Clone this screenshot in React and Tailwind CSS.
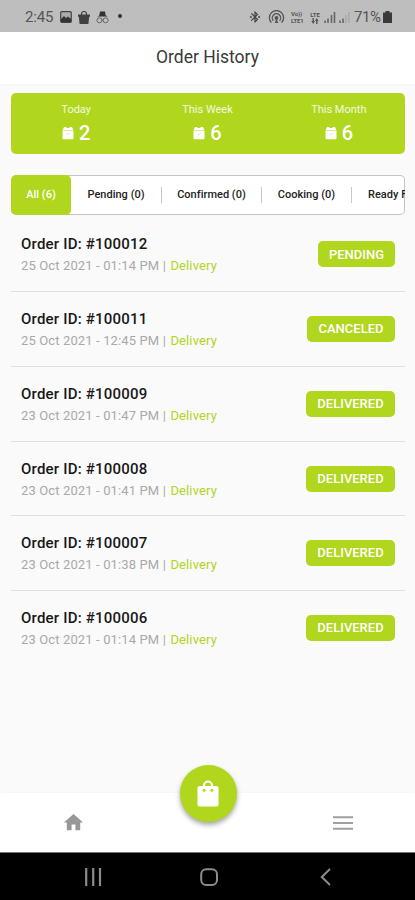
import React, { useState } from 'react'
import { MdBluetoothConnected, MdHome } from 'react-icons/md';

const stats = [
  { label: "Today", count: 2 },
  { label: "This Week", count: 6 },
  { label: "This Month", count: 6 },
]

const tabs = [
  { label: "All (6)", width: "w-[60px]" },
  { label: "Pending (0)", width: "w-[91px]" },
  { label: "Confirmed (0)", width: "w-[100px]" },
  { label: "Cooking (0)", width: "w-[90px]" },
  { label: "Ready For Handover (0)", width: "w-[150px]" },
]

const orders = [
  { id: 100012, date: "25 Oct 2021 - 01:14 PM", status: "PENDING", width: "w-[77px]" },
  { id: 100011, date: "25 Oct 2021 - 12:45 PM", status: "CANCELED", width: "w-[88px]" },
  { id: 100009, date: "23 Oct 2021 - 01:47 PM", status: "DELIVERED", width: "w-[89px]" },
  { id: 100008, date: "23 Oct 2021 - 01:41 PM", status: "DELIVERED", width: "w-[89px]" },
  { id: 100007, date: "23 Oct 2021 - 01:38 PM", status: "DELIVERED", width: "w-[89px]" },
  { id: 100006, date: "23 Oct 2021 - 01:14 PM", status: "DELIVERED", width: "w-[89px]" },
]

function StatusBar() {
  return (
    <div className="flex h-8 shrink-0 items-center justify-between bg-[#bebebe] pl-[25px] pr-[23px] pt-[2px] text-[#555]">
      <div className="flex items-center">
        <span className="w-[29px] whitespace-nowrap text-[15px] leading-none tracking-[-0.2px]">2:45</span>
        <svg className="ml-[6px]" width="12" height="12" viewBox="0 0 12 12">
          <rect x="0.7" y="0.7" width="10.6" height="10.6" rx="1" fill="#aaa" stroke="#444" strokeWidth="1.2" />
          <path d="M1 11V8l3-3 2 2 2-1.5L11 8v3z" fill="#333" />
        </svg>
        <svg className="ml-[6px]" width="12" height="13" viewBox="0 0 12 13">
          <path d="M3.5 4V2.8a2.5 2.3 0 0 1 5 0V4" fill="none" stroke="#444" strokeWidth="1.2" />
          <path d="M0 3.5h12v2.3H0zM0.8 5.6h10.4L10.4 13H1.6z" fill="#404040" />
        </svg>
        <svg className="ml-[6px]" width="13" height="13" viewBox="0 0 13 13">
          <path d="M3.3 4.4 4 0.6h5l0.7 3.8L12 5.6H1z" fill="#333" />
          <circle cx="3.4" cy="9.3" r="2.5" fill="none" stroke="#666" />
          <circle cx="9.6" cy="9.3" r="2.5" fill="none" stroke="#666" />
          <path d="M5.8 9h1.4" stroke="#666" />
        </svg>
        <span className="ml-[9px] mt-[-2px] h-[4px] w-[4px] rounded-full bg-[#333]"></span>
      </div>
      <div className="flex items-center">
        <MdBluetoothConnected size={14} color="#444" />
        <svg className="ml-[6px]" width="17" height="14" viewBox="0 0 17 14" fill="none" stroke="#555" strokeWidth="1.3">
          <path d="M3.4 12.6a7.1 7.1 0 1 1 10.2 0" />
          <path d="M5.4 10.8a4.2 4.2 0 1 1 6.2 0" />
          <circle cx="8.5" cy="8" r="1.3" fill="#555" />
          <path d="M8.5 9 6.6 13h3.8z" fill="#555" stroke="none" />
        </svg>
        <div className="ml-[6px] w-[15px] text-[6px] font-bold leading-[7px] tracking-[-0.1px]">
          <p>Vo))</p>
          <p>LTE1</p>
        </div>
        <div className="ml-[3px] w-[12px] text-center text-[6px] font-bold leading-[7px]">
          <p>LTE</p>
          <svg className="mx-auto" width="8" height="6" viewBox="0 0 8 6" fill="#555">
            <path d="M1.5 0h1.4v3H4L2.2 6 .4 3h1.1zM5.1 6h1.4V3h1.1L5.8 0 4 3h1.1z" />
          </svg>
        </div>
        <svg className="ml-[3px]" width="27" height="12" viewBox="0 0 27 12">
          <path d="M1 12V9.5M4 12V7.5M7.5 12V4M10.5 12V1M16 12V9.5M19 12V7.5" stroke="#666" strokeWidth="1.6" />
          <path d="M22 12V4M25 12V1" stroke="#aaa" strokeWidth="1.6" />
        </svg>
        <span className="ml-[3px] w-[28px] whitespace-nowrap text-[15px] leading-none tracking-[-0.4px]">71%</span>
        <svg className="ml-[1px]" width="9" height="12" viewBox="0 0 9 12">
          <path d="M2.5 0h4v1.5H9V12H0V1.5h2.5z" fill="#3a3a3a" />
        </svg>
      </div>
    </div>
  )
}

function BagIcon() {
  return (
    <svg width="12" height="14" viewBox="0 0 12 14" fill="#fff">
      <path d="M2 1h2.5v1h3V1H10l1.3 3H0.7z" />
      <path d="M0.5 4.4h11V12a1.2 1.2 0 0 1-1.2 1.2H1.7A1.2 1.2 0 0 1 .5 12z" />
      <path d="M4.3 7.8l1.4 1.3 2.2-2.6" fill="none" stroke="#d3e98c" strokeWidth="0.8" />
    </svg>
  )
}

function Stats() {
  return (
    <div className="mt-[9px] flex h-[61px] rounded-[5px] bg-[#b0d61e] text-white">
      {stats.map((item) => (
        <div key={item.label} className="flex flex-1 flex-col items-center pr-px pt-[10px]">
          <p className="text-[11px] leading-[14px] text-white/85">{item.label}</p>
          <div className="mt-[4px] flex items-center gap-[5px]">
            <BagIcon />
            <p className="text-[20px] font-medium leading-[24px]">{item.count}</p>
          </div>
        </div>
      ))}
    </div>
  )
}

function Tabs() {
  const [active, setActive] = useState(0);

  return (
    <div className="mt-[21px] flex h-10 overflow-hidden rounded-[5px] bg-white ring-1 ring-inset ring-[#c4c4c4]">
      {tabs.map((tab, index) => (
        <button
          key={tab.label}
          onClick={() => setActive(index)}
          className={`${tab.width} ${active == index ? "rounded-[5px] bg-[#b0d61e] text-white" : "text-[#222]"} flex shrink-0 items-center`}
        >
          <span className={`${index == 4 ? "pl-4 text-left" : "text-center"} flex-1 whitespace-nowrap pt-px text-[11px] font-medium tracking-[0.02px]`}>{tab.label}</span>
          {index > 0 && <span className="h-4 w-px bg-[#c8c8c8]"></span>}
        </button>
      ))}
    </div>
  )
}

function Order({ order }) {
  return (
    <li className="flex h-[74.7px] items-center justify-between border-b border-[#dedede] pl-[10px] pr-[10px] last:border-transparent">
      <div className="pt-[2px]">
        <p className="text-[15px] font-medium leading-[20px] tracking-[0.21px] text-[#181818]">Order ID: #{order.id}</p>
        <p className="mt-[2px] whitespace-nowrap text-[13px] leading-[20px] tracking-[0.13px] text-[#a9a9a9]">
          {order.date} <span className="mr-px">|</span> <span className="text-[#b0d61e]">Delivery</span>
        </p>
      </div>
      <span className={`${order.width} flex h-[26px] items-center justify-center rounded-[5px] bg-[#b0d61e] text-[13px] font-medium text-white`}>{order.status}</span>
    </li>
  )
}

function BottomNav() {
  return (
    <nav className="relative flex h-[59px] shrink-0 items-center justify-between bg-white px-[62px] shadow-[0_-1px_3px_rgba(0,0,0,0.02)]">
      <MdHome size={23} color="#979797" />
      <button className="absolute left-[179.5px] top-[-28px] flex h-[57px] w-[57px] items-center justify-center rounded-full bg-[#b0d61e] shadow-[0_3px_5px_rgba(0,0,0,0.35)]">
        <svg width="22" height="27" viewBox="0 0 22 27">
          <path d="M7 7V5.5a4 4 0 0 1 8 0V7" fill="none" stroke="#fff" strokeWidth="2" />
          <rect x="0.5" y="6" width="21" height="20.5" rx="2" fill="#fff" />
          <circle cx="7.2" cy="10.2" r="1.5" fill="#b0d61e" />
          <circle cx="14.8" cy="10.2" r="1.5" fill="#b0d61e" />
        </svg>
      </button>
      <svg width="20" height="14" viewBox="0 0 20 14">
        <path d="M0 1.2h20M0 7h20M0 12.8h20" stroke="#a0a0a0" strokeWidth="1.9" />
      </svg>
    </nav>
  )
}

function SystemNav() {
  return (
    <div className="flex h-12 shrink-0 items-center border-t border-[#777] bg-black pl-[84px] text-[#8c8c8c]">
      <svg width="18" height="18" viewBox="0 0 18 18" fill="none" stroke="currentColor" strokeWidth="2.2">
        <path d="M2.2 0v18M9.2 0v18M16 0v18" />
      </svg>
      <svg className="ml-[98px]" width="18" height="18" viewBox="0 0 18 18" fill="none" stroke="currentColor" strokeWidth="2">
        <rect x="1.2" y="1.2" width="15.8" height="15.8" rx="5" />
      </svg>
      <svg className="ml-[102px]" width="12" height="18" viewBox="0 0 12 18" fill="none" stroke="currentColor" strokeWidth="2">
        <path d="M10 1 1.8 9l8.2 8" />
      </svg>
    </div>
  )
}

function App() {
  return (
    <div className="flex h-[900px] w-[415px] flex-col overflow-hidden bg-[#fafafa] font-[Roboto,sans-serif]">
      <StatusBar />
      <header className="flex h-[52px] shrink-0 items-center justify-center bg-white shadow-[0_1px_2px_rgba(0,0,0,0.03)]">
        <h1 className="text-[17.5px] leading-none text-[#3a3a3a]">Order History</h1>
      </header>
      <main className="flex-1 pl-[11px] pr-[10px]">
        <Stats />
        <Tabs />
        <ul className="mt-[2.6px]">
          {orders.map((order) => (
            <Order key={order.id} order={order} />
          ))}
        </ul>
      </main>
      <BottomNav />
      <SystemNav />
    </div>
  )
}

export default App
